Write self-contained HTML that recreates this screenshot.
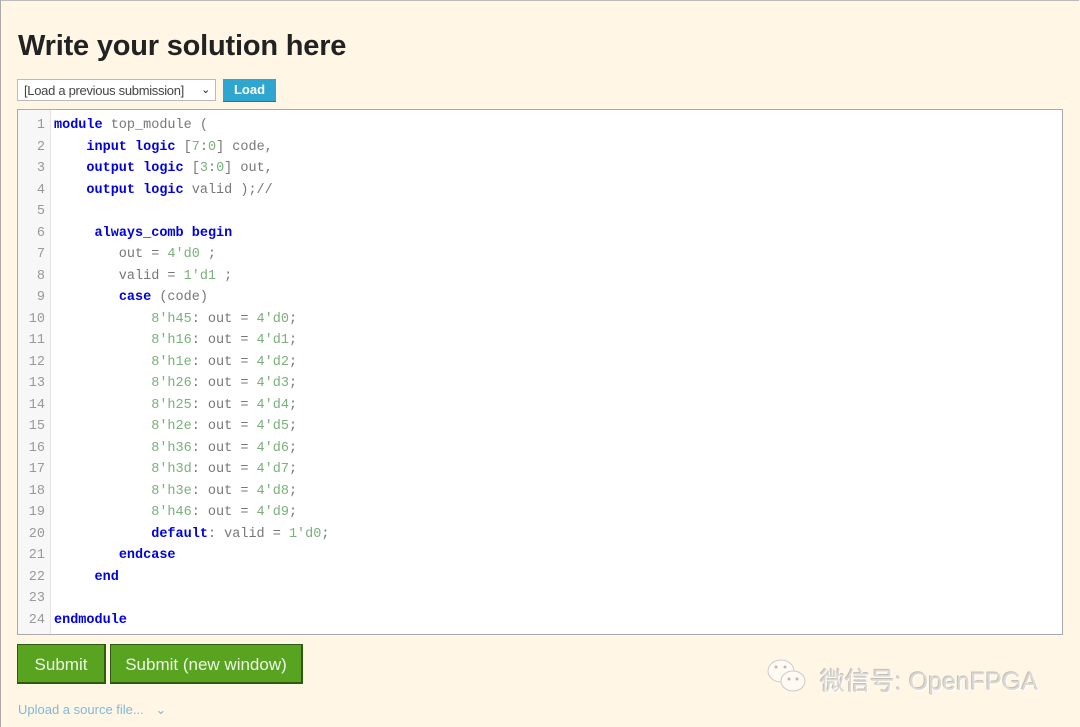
<!DOCTYPE html>
<html><head><meta charset="utf-8"><style>
body{margin:0;width:1080px;height:726px;background:#fff6e6;font-family:"Liberation Sans",sans-serif;overflow:hidden;position:relative}
.frame{position:absolute;left:0;top:0;width:1078px;height:726px;border-left:1px solid #aaa;border-top:1px solid #bbb}
h1{position:absolute;left:18px;top:30px;margin:0;font-size:29px;font-weight:bold;color:#222;letter-spacing:-0.2px}
.sel{position:absolute;left:17px;top:79px;width:199px;height:22px;background:#fff;border:1px solid #bbb;font-size:13px;color:#444;line-height:21px;padding-left:6px;box-sizing:border-box;letter-spacing:-0.3px}
.sel span{position:absolute;right:5px;top:0;font-size:11px;color:#222}
.load{position:absolute;left:223px;top:79px;width:53px;height:23px;background:#2fa6cf;color:#fff;font-size:13px;font-weight:bold;text-align:center;line-height:21px;border-bottom:1px solid #1a7a9a;box-sizing:border-box}
.ed{position:absolute;left:17px;top:109px;width:1046px;height:526px;background:#fff;border:1px solid #aaa;box-sizing:border-box}
.gut{position:absolute;left:0;top:0;width:32px;height:100%;background:#f7f7f7;border-right:1px solid #e4e4e4}
.ln{position:absolute;left:0;top:5px;width:27px;text-align:right;font-family:"Liberation Mono",monospace;font-size:13.5px;line-height:21.52px;color:#999}
.code{position:absolute;left:36px;top:5px;font-family:"Liberation Mono",monospace;font-size:13.5px;line-height:21.52px;color:#777;white-space:pre}
.k{color:#0000e0;font-weight:bold}.n{color:#7ab07a}
.btn{position:absolute;top:644px;height:40px;background:#58a31f;border:1px solid #2f5a10;border-right-width:2px;border-bottom-width:2px;color:#eef7e6;font-size:17px;line-height:40px;text-align:center;box-sizing:border-box}
.up{position:absolute;left:18px;top:702px;font-size:13px;color:#7fb9d4}
.wx{position:absolute;left:820px;top:662px;font-size:25px;color:#ddd8d0;font-family:"Liberation Sans","Noto Sans CJK SC",sans-serif;text-shadow:1px 1px 0 #fff,-1px -1px 0 #c4c0b8}
</style></head><body>
<div class="frame"></div>
<h1>Write your solution here</h1>
<div class="sel">[Load a previous submission]<span>&#8964;</span></div>
<div class="load">Load</div>
<div class="ed"><div class="gut"></div>
<div class="ln">1<br>2<br>3<br>4<br>5<br>6<br>7<br>8<br>9<br>10<br>11<br>12<br>13<br>14<br>15<br>16<br>17<br>18<br>19<br>20<br>21<br>22<br>23<br>24</div>
<div class="code"><span class="k">module</span> top_module (
    <span class="k">input</span> <span class="k">logic</span> [<span class="n">7</span>:<span class="n">0</span>] code,
    <span class="k">output</span> <span class="k">logic</span> [<span class="n">3</span>:<span class="n">0</span>] out,
    <span class="k">output</span> <span class="k">logic</span> valid );//

     <span class="k">always_comb</span> <span class="k">begin</span>
        out = <span class="n">4'd0</span> ;
        valid = <span class="n">1'd1</span> ;
        <span class="k">case</span> (code)
            <span class="n">8'h45</span>: out = <span class="n">4'd0</span>;
            <span class="n">8'h16</span>: out = <span class="n">4'd1</span>;
            <span class="n">8'h1e</span>: out = <span class="n">4'd2</span>;
            <span class="n">8'h26</span>: out = <span class="n">4'd3</span>;
            <span class="n">8'h25</span>: out = <span class="n">4'd4</span>;
            <span class="n">8'h2e</span>: out = <span class="n">4'd5</span>;
            <span class="n">8'h36</span>: out = <span class="n">4'd6</span>;
            <span class="n">8'h3d</span>: out = <span class="n">4'd7</span>;
            <span class="n">8'h3e</span>: out = <span class="n">4'd8</span>;
            <span class="n">8'h46</span>: out = <span class="n">4'd9</span>;
            <span class="k">default</span>: valid = <span class="n">1'd0</span>;
        <span class="k">endcase</span>
     <span class="k">end</span>

<span class="k">endmodule</span></div></div>
<div class="btn" style="left:17px;width:89px">Submit</div>
<div class="btn" style="left:110px;width:193px">Submit (new window)</div>
<div class="up">Upload a source file... <span style="margin-left:8px">&#8964;</span></div>
<svg style="position:absolute;left:766px;top:657px" width="48" height="40" viewBox="0 0 48 40"><ellipse cx="15" cy="14" rx="13" ry="11" fill="#fffaf2" stroke="#ccc"/><ellipse cx="27" cy="24" rx="12" ry="10" fill="#fffaf2" stroke="#ccc"/><circle cx="10" cy="10" r="1.5" fill="#bbb"/><circle cx="19" cy="10" r="1.5" fill="#bbb"/><circle cx="23" cy="22" r="1.5" fill="#bbb"/><circle cx="31" cy="22" r="1.5" fill="#bbb"/></svg>
<div class="wx">微信号: OpenFPGA</div>
</body></html>
